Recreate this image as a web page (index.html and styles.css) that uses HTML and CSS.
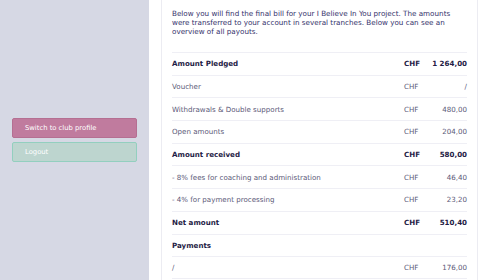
FILE: index.html
```html
<!DOCTYPE html>
<html lang="en">
<head>
    <meta charset="UTF-8">
    <meta name="viewport" content="width=device-width, initial-scale=1.0">
    <title>Final bill</title>
    <link rel="stylesheet" href="styles.css">
</head>
<body>
    <aside class="sidebar">
        <button class="side-btn switch-btn">Switch to club profile</button>
        <button class="side-btn logout-btn">Logout</button>
    </aside>

    <main class="content">
        <div class="bill-card">
            <p class="intro">Below you will find the final bill for your I Believe In You project. The amounts were transferred to your account in several tranches. Below you can see an overview of all payouts.</p>

            <div class="bill-table">
                <div class="bill-row total">
                    <span class="label">Amount Pledged</span>
                    <span class="currency">CHF</span>
                    <span class="amount">1 264,00</span>
                </div>
                <div class="bill-row">
                    <span class="label">Voucher</span>
                    <span class="currency">CHF</span>
                    <span class="amount">/</span>
                </div>
                <div class="bill-row">
                    <span class="label">Withdrawals &amp; Double supports</span>
                    <span class="currency">CHF</span>
                    <span class="amount">480,00</span>
                </div>
                <div class="bill-row">
                    <span class="label">Open amounts</span>
                    <span class="currency">CHF</span>
                    <span class="amount">204,00</span>
                </div>
                <div class="bill-row total">
                    <span class="label">Amount received</span>
                    <span class="currency">CHF</span>
                    <span class="amount">580,00</span>
                </div>
                <div class="bill-row">
                    <span class="label">- 8% fees for coaching and administration</span>
                    <span class="currency">CHF</span>
                    <span class="amount">46,40</span>
                </div>
                <div class="bill-row">
                    <span class="label">- 4% for payment processing</span>
                    <span class="currency">CHF</span>
                    <span class="amount">23,20</span>
                </div>
                <div class="bill-row total">
                    <span class="label">Net amount</span>
                    <span class="currency">CHF</span>
                    <span class="amount">510,40</span>
                </div>
                <div class="bill-row total">
                    <span class="label">Payments</span>
                    <span class="currency"></span>
                    <span class="amount"></span>
                </div>
                <div class="bill-row">
                    <span class="label">/</span>
                    <span class="currency">CHF</span>
                    <span class="amount">176,00</span>
                </div>
            </div>
        </div>
    </main>
</body>
</html>
```

FILE: styles.css
```css
/* Base */
body {
    margin: 0;
    padding: 0;
    background: white;
    font-family: 'DejaVu Sans', sans-serif;
    color: #2b2855;
    display: flex;
    height: 100vh;
    overflow: hidden;
}

/* Sidebar */
.sidebar {
    width: 149px;
    flex-shrink: 0;
    background-color: #d6d8e4;
    display: flex;
    flex-direction: column;
    justify-content: center;
    gap: 4px;
    padding: 0 12px;
    box-sizing: border-box;
}

.side-btn {
    height: 20px;
    padding: 0 0 0 12px;
    border-radius: 2px;
    color: white;
    font-family: inherit;
    font-size: 6.8px;
    text-align: left;
    cursor: pointer;
}

.switch-btn {
    background-color: #c07b9e;
    border: 1px solid #b56f92;
}

.logout-btn {
    background-color: #bdd5cf;
    border: 1px solid #93cfbf;
}

/* Content */
.content {
    flex: 1;
    padding: 0 22px 0 12px;
}

.bill-card {
    height: 100%;
    border-left: 1px solid #ececf2;
    border-right: 1px solid #ececf2;
    padding: 9px 10px 0 10px;
    box-sizing: border-box;
}

.intro {
    margin: 0 0 16px;
    font-size: 7.2px;
    line-height: 9px;
    color: #34316a;
}

/* Bill table */
.bill-row {
    display: grid;
    grid-template-columns: 1fr 25px 38px;
    align-items: center;
    height: 22.7px;
    border-top: 1px solid #efeff5;
    box-sizing: border-box;
    font-size: 7.1px;
    color: #5b5978;
}

.bill-row:last-child {
    border-bottom: 1px solid #efeff5;
}

.bill-row .amount {
    text-align: right;
}

.bill-row.total {
    font-weight: bold;
    color: #1f1c45;
}
```
